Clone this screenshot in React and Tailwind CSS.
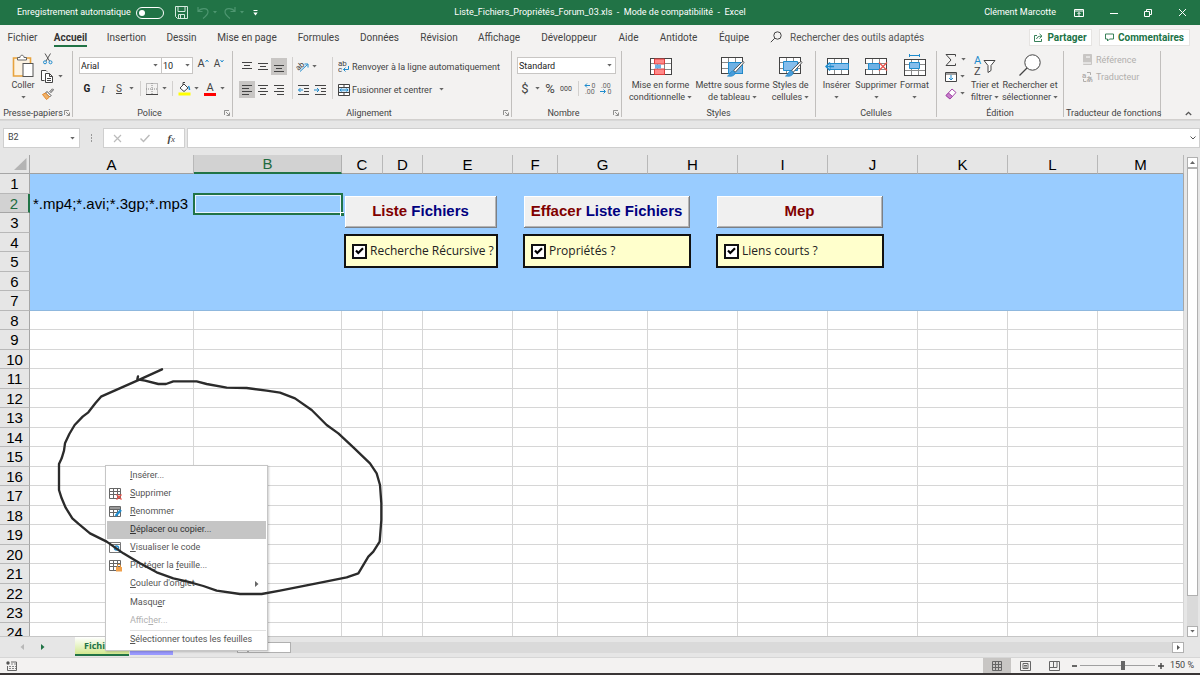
import React from "react";

const INK = "#444444";
const BLUE = "#1e8bcd";

function Icon({ w = 16, h = 16, children, className = "" }) {
  return (
    <svg width={w} height={h} viewBox={`0 0 ${w} ${h}`} fill="none" stroke={INK} strokeWidth="1" className={`shrink-0 ${className}`} aria-hidden="true">
      {children}
    </svg>
  );
}

function Caret({ className = "" }) {
  return (
    <svg width="5" height="3" viewBox="0 0 5 3" className={`shrink-0 ${className}`} aria-hidden="true">
      <path d="M0.3 0h4.4L2.5 2.6z" fill="#666" />
    </svg>
  );
}

function Launcher() {
  return (
    <button aria-label="Plus d'options" className="flex">
      <Icon w={6} h={6}>
        <path d="M0.5 5V0.5H5M2 2l3 3M5.5 2.5v3h-3" stroke="#777" strokeWidth="0.8" />
      </Icon>
    </button>
  );
}

function Group({ label, width, launcher, children }) {
  return (
    <section className={`flex h-[66px] shrink-0 flex-col border-r border-[#c1bfbd] ${width}`}>
      <div className="flex h-[58px] items-start">{children}</div>
      <div className="flex h-[8px] items-center px-[2px]">
        <span className="flex-1 text-center whitespace-nowrap">{label}</span>
        {launcher && <Launcher />}
      </div>
    </section>
  );
}

function Tool({ label, children, className = "" }) {
  return (
    <button aria-label={label} title={label} className={`flex h-4 w-4 shrink-0 items-center justify-center ${className}`}>
      {children}
    </button>
  );
}

function Big({ icon, lines, width, caretBelow }) {
  return (
    <button className={`flex shrink-0 flex-col items-center pt-px ${width}`}>
      <span className="flex h-[27px] items-center">{icon}</span>
      <span className="leading-[12px] whitespace-nowrap">{lines[0]}</span>
      {caretBelow ? (
        <span className="flex h-[12px] items-center"><Caret /></span>
      ) : (
        <span className="flex items-center gap-[2px] leading-[12px] whitespace-nowrap">
          {lines[1]}
          <Caret />
        </span>
      )}
    </button>
  );
}

function Lines({ rows }) {
  return (
    <Icon w={12} h={12}>
      <path d={rows.map(([x1, x2, y]) => `M${x1} ${y}H${x2}`).join("")} />
    </Icon>
  );
}

const TableGrid = () => (
  <>
    <rect x="0.5" y="2.5" width="21" height="16" fill="#fff" />
    <path d="M0 7.5h22M0 13.5h22M7.5 2v17M14.5 2v17" stroke="#8a8a8a" />
    <rect x="0.5" y="2.5" width="21" height="16" />
  </>
);

const Brush = () => (
  <>
    <path d="M23 7.5 14.5 17l-2-1.6L20.5 7.5c1.2-1.2 2.8-.8 2.5 0z" fill="#fff" stroke="#555" />
    <path d="M14 17.3c.6 2.7-2.2 4.5-7.500 3.800 2.500-1 2.300-4.500 5.300-5.200z" fill="#4a9bd8" stroke={BLUE} strokeWidth="0.8" />
  </>
);

const TABS = [
  ["Fichier", "w-[45px]"],
  ["Accueil", "w-[51px]"],
  ["Insertion", "w-[61px]"],
  ["Dessin", "w-[49px]"],
  ["Mise en page", "w-[82px]"],
  ["Formules", "w-[61px]"],
  ["Données", "w-[61px]"],
  ["Révision", "w-[58px]"],
  ["Affichage", "w-[62px]"],
  ["Développeur", "w-[78px]"],
  ["Aide", "w-[41px]"],
  ["Antidote", "w-[59px]"],
  ["Équipe", "w-[52px]"],
];

const COLUMNS = [
  ["A", "w-[164px]"],
  ["B", "w-[148px]"],
  ["C", "w-[41px]"],
  ["D", "w-[40px]"],
  ["E", "w-[90px]"],
  ["F", "w-[45px]"],
  ["G", "w-[90px]"],
  ["H", "w-[90px]"],
  ["I", "w-[90px]"],
  ["J", "w-[90px]"],
  ["K", "w-[90px]"],
  ["L", "w-[90px]"],
  ["M", ""],
];

const ROWS = Array.from({ length: 24 }, (_, i) => i + 1);

function TitleBar() {
  return (
    <header className="grid h-[25px] shrink-0 grid-cols-[1fr_auto_1fr] items-center bg-[#217346] text-[9px] text-white">
      <div className="flex items-center pl-[17px]">
        <label htmlFor="autosave" className="w-[119px] whitespace-nowrap">Enregistrement automatique</label>
        <span className="grid items-center">
          <input id="autosave" type="checkbox" role="switch" className="h-[12px] w-7 appearance-none rounded-full border border-white [grid-area:1/1]" />
          <span className="pointer-events-none ml-[3px] h-[6px] w-[6px] rounded-full bg-white [grid-area:1/1]" />
        </span>
        <button aria-label="Enregistrer" className="ml-[11px]">
          <Icon w={13} h={13}>
            <path d="M0.5 0.500h12v12h-10l-2-2zM3 0.500v5h7v-5M3.500 12.500v-4h6v4M5.500 9v3" stroke="#d5ebdf" />
          </Icon>
        </button>
        <button aria-label="Annuler" className="ml-[9px] flex items-center gap-[4px]">
          <Icon w={12} h={13}>
            <path d="M1 1v4.500h4.500M1 5.500C4 1.500 11 1.500 11 6c0 2.500-2.500 4.500-5 6.500" stroke="#4d9670" strokeWidth="1.200" />
          </Icon>
          <svg width="4" height="3"><path d="M0 0h4L2 2.500z" fill="#4d9670" /></svg>
        </button>
        <button aria-label="Rétablir" className="ml-[7px] flex items-center gap-[4px]">
          <Icon w={12} h={13}>
            <path d="M11 1v4.500H6.500M11 5.500C8 1.500 1 1.500 1 6c0 2.500 2.500 4.500 5 6.500" stroke="#4d9670" strokeWidth="1.200" />
          </Icon>
          <svg width="4" height="3"><path d="M0 0h4L2 2.500z" fill="#4d9670" /></svg>
        </button>
        <button aria-label="Personnaliser la barre d'outils" className="ml-[9px]">
          <Icon w={5} h={6}>
            <path d="M0.500 0.500h4" stroke="#fff" />
            <path d="M0.300 2.500h4.400L2.500 5.500z" fill="#fff" stroke="none" />
          </Icon>
        </button>
      </div>
      <h1 className="whitespace-pre">Liste_Fichiers_Propriétés_Forum_03.xls  -  Mode de compatibilité  -  Excel</h1>
      <div className="flex items-center justify-end pr-[13px]">
        <span className="mr-[18px] whitespace-nowrap">Clément Marcotte</span>
        <button aria-label="Options d'affichage du ruban" className="mr-[26px]">
          <Icon w={10} h={8}><path d="M0.500 0.500h9v7h-9zM1 2h8M5 7V3.500M3.500 5L5 3.500 6.500 5" stroke="#fff" /></Icon>
        </button>
        <button aria-label="Réduire" className="mr-[26px]">
          <Icon w={8} h={8}><path d="M0 4.500h8" stroke="#fff" /></Icon>
        </button>
        <button aria-label="Restaurer" className="mr-[26px]">
          <Icon w={8} h={8}><path d="M0.500 2.500h5v5h-5zM2.500 2.500v-2h5v5h-2" stroke="#fff" /></Icon>
        </button>
        <button aria-label="Fermer">
          <Icon w={9} h={9}><path d="M1 1l7 7M8 1L1 8" stroke="#fff" /></Icon>
        </button>
      </div>
    </header>
  );
}

function TabBar() {
  return (
    <nav className="flex h-[24px] shrink-0 items-center bg-[#f3f2f1] text-[10px] text-[#444]">
      {TABS.map(([name, width]) => (
        <button key={name} className={`flex h-full shrink-0 items-center justify-center whitespace-nowrap ${width}`}>
          <span className={name === "Accueil" ? "border-y-2 border-t-transparent border-b-[#217346] leading-[15px] font-bold text-[#333]" : ""}>{name}</span>
        </button>
      ))}
      <label htmlFor="search" className="ml-[10px]">
        <Icon w={12} h={12}>
          <circle cx="7.500" cy="4.500" r="3.700" />
          <path d="M4.800 7.200L0.800 11.200" />
        </Icon>
      </label>
      <input id="search" placeholder="Rechercher des outils adaptés" className="ml-[8px] w-[180px] bg-transparent outline-none placeholder:text-[#555]" />
      <div className="ml-auto flex gap-[7px] pr-[10px] font-bold text-[#217346]">
        <button className="flex h-[17px] w-[63px] items-center justify-center gap-[4px] border border-[#e6e4e2] bg-white">
          <Icon w={9} h={9}><path d="M3 2.500H0.500v6h7V6M2.500 6c.5-2 2-2.800 5-2.800M5.500 0.800L8 3.200 5.500 5.500" stroke="#217346" strokeWidth="0.900" /></Icon>
          Partager
        </button>
        <button className="flex h-[17px] w-[91px] items-center justify-center gap-[4px] border border-[#e6e4e2] bg-white">
          <Icon w={9} h={9}><path d="M0.500 1h8v5h-4L2.500 8V6h-2z" stroke="#217346" strokeWidth="0.900" /></Icon>
          Commentaires
        </button>
      </div>
    </nav>
  );
}

function Ribbon() {
  return (
    <div className="flex h-[71px] shrink-0 overflow-hidden border-b border-[#d2d0ce] bg-[#f3f2f1] pt-[2px] text-[9px] leading-[12px] text-[#444]">
      <Group label="Presse-papiers" width="w-[73px]" launcher>
        <Big
          width="w-[46px]"
          caretBelow
          lines={["Coller"]}
          icon={
            <Icon w={22} h={24}>
              <path d="M1.500 4h17v18h-17z" stroke="#e8a33d" strokeWidth="1.600" fill="#fdf3e2" />
              <path d="M5.500 6V3.500h2.500c0-3 4-3 4 0H14.500V6z" fill="#fff" stroke="#666" />
              <rect x="11" y="9.500" width="10" height="13" fill="#fff" stroke="#555" />
            </Icon>
          }
        />
        <div className="flex flex-col">
          <Tool label="Couper" className="-ml-[6px]">
            <Icon w={10} h={12}>
              <path d="M2 0.500l4.500 7.500M7.500 0.500L3 8" stroke="#555" />
              <circle cx="2" cy="9.300" r="1.500" stroke={BLUE} /><circle cx="7.500" cy="9.300" r="1.500" stroke={BLUE} />
            </Icon>
          </Tool>
          <button aria-label="Copier" className="-ml-[5px] flex h-[19px] items-center gap-[5px]">
            <Icon w={12} h={13}>
              <path d="M3.500 10.500h-3v-10h4.500l1 1" fill="#fff" />
              <path d="M4.500 3.500h4l3 3v6h-7zM8.500 3.500v3h3M6 8.500h4M6 10.500h4" fill="#fff" />
            </Icon>
            <Caret />
          </button>
          <Tool label="Reproduire la mise en forme" className="-ml-[6px]">
            <Icon w={12} h={12}>
              <path d="M7.500 4L10.500 0.800 11.500 1.800 8.500 5" stroke="#555" />
              <path d="M5 3.500l4 4-1.500 1.500-4-4z" fill="#fff" />
              <path d="M3.500 5L0.500 6.500l4 5L7.500 9z" fill="#f0b26a" stroke="#e58a2c" />
            </Icon>
          </Tool>
        </div>
      </Group>

      <Group label="Police" width="w-[160px]" launcher>
        <div className="flex flex-col gap-[6px] pt-[6px] pl-[6px]">
          <div className="flex h-[17px] items-center">
            <label className="flex h-full w-[83px] items-center border border-[#c8c6c4] bg-white pr-[3px]">
              <select aria-label="Police" className="min-w-0 flex-1 appearance-none bg-transparent pl-[1px] text-[#222] outline-none"><option>Arial</option></select>
              <Caret />
            </label>
            <label className="-ml-px flex h-full w-[32px] items-center border border-[#c8c6c4] bg-white pr-[2px]">
              <select aria-label="Taille de police" className="min-w-0 flex-1 appearance-none bg-transparent pl-[1px] text-[#222] outline-none"><option>10</option></select>
              <Caret />
            </label>
            <Tool label="Agrandir la police" className="ml-[2px] items-start">
              <span className="text-[11px]">A</span><svg width="4" height="5"><path d="M0.500 4L2 2l1.500 2" stroke={BLUE} fill="none" /></svg>
            </Tool>
            <Tool label="Réduire la police" className="items-start">
              <span className="text-[10px]">A</span><svg width="4" height="5"><path d="M0.500 2L2 4l1.500-2" stroke={BLUE} fill="none" /></svg>
            </Tool>
          </div>
          <div className="flex h-[17px] items-center">
            <Tool label="Gras"><b className="text-[10px] text-[#222]">G</b></Tool>
            <Tool label="Italique"><i className="font-['Liberation_Serif',serif] text-[11px]">I</i></Tool>
            <Tool label="Souligné"><span className="text-[10px] underline underline-offset-1">S</span></Tool>
            <Caret className="ml-[2px]" />
            <span className="ml-[6px] h-[15px] w-px bg-[#d2d0ce]" />
            <Tool label="Bordures" className="ml-[3px]">
              <Icon w={12} h={12}><path d="M0.500 0.500h11v11h-11zM6 0v12M0 6h12" stroke="#888" strokeDasharray="1 1" /><path d="M0 11.500h12" /></Icon>
            </Tool>
            <Caret className="ml-[2px]" />
            <span className="ml-[5px] h-[15px] w-px bg-[#d2d0ce]" />
            <Tool label="Couleur de remplissage" className="ml-[3px]">
              <Icon w={13} h={14}>
                <path d="M2 6l4-4 4 4-4 3.500zM5 3V0.500h2" fill="#fff" />
                <path d="M10.500 4c1 2 1 3 1 4" stroke={BLUE} strokeWidth="1.500" />
                <path d="M0.500 12h12" stroke="#ff0" strokeWidth="3" />
              </Icon>
            </Tool>
            <Caret className="ml-[2px]" />
            <Tool label="Couleur de police" className="ml-[3px] flex-col">
              <span className="text-[11px] leading-[11px]">A</span>
              <span className="h-[3px] w-[12px] bg-[#f00]" />
            </Tool>
            <Caret className="ml-[2px]" />
          </div>
        </div>
      </Group>

      <Group label="Alignement" width="w-[279px]" launcher>
        <div className="flex items-center pt-[6px] pl-[6px]">
          <div className="flex flex-col gap-[6px]">
            <div className="flex h-[17px] items-center">
              <Tool label="Aligner en haut" className="h-[17px]"><Lines rows={[[1, 11, 1.5], [3, 9, 4.5], [1, 11, 7.5]]} /></Tool>
              <Tool label="Aligner au centre" className="h-[17px]"><Lines rows={[[1, 11, 2.5], [3, 9, 5.5], [1, 11, 8.5]]} /></Tool>
              <Tool label="Aligner en bas" className="h-[17px] bg-[#c8c6c4]"><Lines rows={[[1, 11, 4.5], [3, 9, 7.5], [1, 11, 10.5]]} /></Tool>
            </div>
            <div className="flex h-[17px] items-center">
              <Tool label="Aligner à gauche" className="h-[17px] bg-[#c8c6c4]"><Lines rows={[[1, 11, 1.5], [1, 8, 4.5], [1, 11, 7.5], [1, 8, 10.5]]} /></Tool>
              <Tool label="Centrer" className="h-[17px]"><Lines rows={[[1, 11, 1.5], [3, 9, 4.5], [1, 11, 7.5], [3, 9, 10.5]]} /></Tool>
              <Tool label="Aligner à droite" className="h-[17px]"><Lines rows={[[1, 11, 1.5], [4, 11, 4.5], [1, 11, 7.5], [4, 11, 10.5]]} /></Tool>
            </div>
          </div>
          <span className="ml-[5px] h-[42px] w-px bg-[#d2d0ce]" />
          <div className="ml-[3px] flex w-[42px] flex-col gap-[6px]">
            <button aria-label="Orientation" className="flex h-[17px] items-center gap-[2px]">
              <Icon w={14} h={13}>
                <text x="0" y="9" transform="rotate(-40 4 7)" fontSize="8" fill={INK} stroke="none">ab</text>
                <path d="M4 11.500L11.500 4.500M8.500 4h3.500v3.500" stroke={BLUE} />
              </Icon>
              <Caret />
            </button>
            <div className="flex h-[17px] items-center">
              <Tool label="Diminuer le retrait">
                <Icon w={12} h={12}><path d="M0 1.500h11M6 4.500h5M6 7.500h5M0 10.500h11" /><path d="M5 6H0.500M2.500 4L0.500 6l2 2" stroke={BLUE} /></Icon>
              </Tool>
              <Tool label="Augmenter le retrait">
                <Icon w={12} h={12}><path d="M1 1.500h11M7 4.500h5M7 7.500h5M1 10.500h11" /><path d="M0 6h5M3 4l2 2-2 2" stroke={BLUE} /></Icon>
              </Tool>
            </div>
          </div>
          <span className="-ml-[6px] h-[42px] w-px bg-[#d2d0ce]" />
          <div className="ml-[5px] flex flex-col gap-[6px]">
            <button className="flex h-[17px] items-center gap-[2px] whitespace-nowrap">
              <Icon w={12} h={13}>
                <text x="0" y="6" fontSize="8" fill={INK} stroke="none">ab</text>
                <text x="0" y="12" fontSize="8" fill={INK} stroke="none">c</text>
                <path d="M10.500 6v3.500H5.500M7.500 7.500l-2 2 2 2" stroke={BLUE} />
              </Icon>
              Renvoyer à la ligne automatiquement
            </button>
            <button className="flex h-[17px] items-center gap-[2px] whitespace-nowrap">
              <Icon w={12} h={12}>
                <path d="M0.500 0.500h11v11h-11zM0 3.500h12M0 8.500h12M6 0v3M6 9v3" fill="#fff" />
                <rect x="1" y="4" width="10" height="4" fill="#cfe6f7" stroke="none" />
                <path d="M2 6h8M3.500 4.500L2 6l1.500 1.500M8.500 4.500L10 6 8.500 7.500" stroke={BLUE} />
              </Icon>
              Fusionner et centrer
              <Caret className="ml-[5px]" />
            </button>
          </div>
        </div>
      </Group>

      <Group label="Nombre" width="w-[110px]" launcher>
        <div className="flex flex-col gap-[6px] pt-[6px] pl-[5px]">
          <label className="flex h-[17px] w-[99px] items-center border border-[#c8c6c4] bg-white pr-[3px]">
            <select aria-label="Format de nombre" className="min-w-0 flex-1 appearance-none bg-transparent pl-[1px] text-[#222] outline-none"><option>Standard</option></select>
            <Caret />
          </label>
          <div className="flex h-[17px] items-center">
            <Tool label="Format comptable"><span className="text-[13px]">$</span></Tool>
            <Caret className="ml-[2px]" />
            <Tool label="Pourcentage" className="ml-[2px]"><span className="text-[13px]">%</span></Tool>
            <Tool label="Milliers"><span className="text-[7px]">000</span></Tool>
            <span className="ml-[4px] h-[15px] w-px bg-[#d2d0ce]" />
            <Tool label="Ajouter une décimale" className="ml-[3px]">
              <Icon w={12} h={13}>
                <text x="7.500" y="6" fontSize="7" fill="#666" stroke="none">0</text>
                <text x="1" y="12" fontSize="7" fill="#666" stroke="none">.00</text>
                <path d="M6 3.500H1M3 1.500L1 3.500l2 2" stroke={BLUE} />
              </Icon>
            </Tool>
            <Tool label="Réduire les décimales">
              <Icon w={12} h={13}>
                <text x="1" y="6" fontSize="7" fill="#666" stroke="none">.00</text>
                <text x="7.500" y="12" fontSize="7" fill="#666" stroke="none">0</text>
                <path d="M0 9.500h5M3.500 7.500l2 2-2 2" stroke={BLUE} />
              </Icon>
            </Tool>
          </div>
        </div>
      </Group>

      <Group label="Styles" width="w-[194px]">
        <Big
          width="w-[77px]"
          lines={["Mise en forme", "conditionnelle"]}
          icon={
            <Icon w={22} h={20}>
              <TableGrid />
              <path d="M4.500 3h10v5h-10zM4.500 13h10v5.500h-10z" fill="#ff8a8a" stroke="#e03c3c" />
              <path d="M5 8.500h6v4H5z" fill="#6fb1e4" stroke="none" />
            </Icon>
          }
        />
        <Big
          width="w-[67px]"
          lines={["Mettre sous forme", "de tableau"]}
          icon={
            <Icon w={24} h={22}>
              <TableGrid />
              <path d="M7.500 7.500h14v11h-14z" fill="#6fb1e4" stroke={BLUE} />
              <Brush />
            </Icon>
          }
        />
        <Big
          width="w-[49px]"
          lines={["Styles de", "cellules"]}
          icon={
            <Icon w={24} h={22}>
              <TableGrid />
              <path d="M4.500 6.500h14v9h-14z" fill="#85bdec" stroke={BLUE} />
              <Brush />
            </Icon>
          }
        />
      </Group>

      <Group label="Cellules" width="w-[121px]">
        <Big
          width="w-[41px]"
          caretBelow
          lines={["Insérer"]}
          icon={
            <Icon w={24} h={20}>
              <g transform="translate(2 0)"><TableGrid /></g>
              <path d="M5 7.500h18.500v6H5z" fill="#85bdec" stroke={BLUE} />
              <path d="M1 10.500h8M5 6.500l-4 4 4 4" stroke={BLUE} strokeWidth="1.500" />
            </Icon>
          }
        />
        <Big
          width="w-[38px]"
          caretBelow
          lines={["Supprimer"]}
          icon={
            <Icon w={23} h={20}>
              <TableGrid />
              <path d="M0 8h4v5H0z" fill="#f3f2f1" stroke="none" />
              <path d="M3.500 7.500h11v6h-11z" fill="#6fb1e4" stroke={BLUE} />
              <path d="M14 6.500l8 8M22 6.500l-8 8" stroke="#e8524a" strokeWidth="1.300" />
            </Icon>
          }
        />
        <Big
          width="w-[39px]"
          caretBelow
          lines={["Format"]}
          icon={
            <Icon w={22} h={24}>
              <g transform="translate(0 3)"><TableGrid /></g>
              <path d="M5.500 8.500h10v6h-10z" fill="#85bdec" stroke={BLUE} />
              <path d="M5 1.500h11M5.500 0v3M15.500 0v3" stroke={BLUE} />
            </Icon>
          }
        />
      </Group>

      <Group label="Édition" width="w-[127px]">
        <div className="flex w-[30px] flex-col pl-[8px]">
          <button aria-label="Somme automatique" className="flex h-[17px] items-center gap-[4px]">
            <Icon w={12} h={12}><path d="M10.500 2.500V0.500H1L6 6l-5 5.500h9.500V9.500" /></Icon><Caret />
          </button>
          <button aria-label="Remplissage" className="flex h-[17px] items-center gap-[3px]">
            <Icon w={12} h={12}><path d="M0.500 1.500h11v9h-11zM0.500 3h11" fill="#fff" /><path d="M6 4v5M4 7l2 2 2-2" stroke={BLUE} /></Icon><Caret />
          </button>
          <button aria-label="Effacer" className="flex h-[17px] items-center gap-[3px]">
            <Icon w={12} h={12}><path d="M7 1l4 3.500-6 6.500-4-3.500z" fill="#fff" stroke="#a346a8" /><path d="M3.500 5L7.500 8.500 5 11 1 7.500z" fill="#c77fcb" stroke="#a346a8" /></Icon><Caret />
          </button>
        </div>
        <Big
          width="w-[36px]"
          lines={["Trier et", "filtrer"]}
          icon={
            <Icon w={22} h={22}>
              <text x="0" y="9" fontSize="11" fill={BLUE} stroke="none">A</text>
              <text x="0" y="20" fontSize="11" fill={INK} stroke="none">Z</text>
              <path d="M10 5.500h11l-4 5v5l-3 2v-7z" fill="#fff" />
            </Icon>
          }
        />
        <Big
          width="w-[54px]"
          lines={["Rechercher et", "sélectionner"]}
          icon={<Icon w={22} h={23}><circle cx="13.500" cy="8.500" r="7.700" fill="#fff" /><path d="M8 14L0.500 21.500" strokeWidth="1.300" /></Icon>}
        />
      </Group>

      <Group label="Traducteur de fonctions" width="w-[97px]">
        <div className="flex flex-col pl-[18px] text-[#b1afad]">
          <button disabled className="flex h-[17px] items-center gap-[3px]">
            <Icon w={11} h={11}><path d="M1.500 0.500h8v10h-8z" fill="#c8c6c4" stroke="#c8c6c4" /><path d="M4 3h4M1 9h8" stroke="#fff" /></Icon>
            Référence
          </button>
          <button disabled className="flex h-[17px] items-center gap-[3px]">
            <Icon w={11} h={11}>
              <text x="0" y="7" fontSize="8" fontWeight="bold" fill="#b1afad" stroke="none">a</text>
              <text x="4" y="11" fontSize="7" fontWeight="bold" fill="#b1afad" stroke="none">あ</text>
              <path d="M5 1.500h3.500v2.500M1.500 8v2.500H4" stroke="#b1afad" />
            </Icon>
            Traducteur
          </button>
        </div>
      </Group>
      <button aria-label="Réduire le ruban" className="mt-auto mr-[8px] mb-[3px] ml-auto">
        <Icon w={7} h={5}><path d="M0.800 4L3.500 1.300 6.200 4" stroke="#555" strokeWidth="1.300" /></Icon>
      </button>
    </div>
  );
}

function FormulaBar() {
  return (
    <div className="flex h-[35px] shrink-0 items-start border-t border-[#d8d8d8] bg-[#e6e6e6] pt-[7px] text-[9px] text-[#444]">
      <label className="ml-[3px] flex h-5 w-[77px] items-center border border-[#cfcfcf] bg-white pr-[4px]">
        <input aria-label="Zone Nom" defaultValue="B2" className="min-w-0 flex-1 bg-transparent pl-[4px] outline-none" />
        <Caret />
      </label>
      <span className="ml-[10px] flex h-5 w-[3px] flex-col items-center justify-center gap-[1px]">
        <i className="h-[2px] w-px bg-[#999]" /><i className="h-[2px] w-px bg-[#999]" /><i className="h-[2px] w-px bg-[#999]" />
      </span>
      <div className="ml-[10px] flex h-5 w-[82px] items-center justify-around border border-[#cfcfcf] bg-white">
        <button aria-label="Annuler la saisie"><Icon w={9} h={9}><path d="M1 1l7 7M8 1L1 8" stroke="#bbb" strokeWidth="1.200" /></Icon></button>
        <button aria-label="Entrer"><Icon w={10} h={9}><path d="M0.500 4.500L3.500 7.500 9.500 1" stroke="#bbb" strokeWidth="1.500" /></Icon></button>
        <button aria-label="Insérer une fonction" className="font-['Liberation_Serif',serif] text-[11px] leading-none italic">
          <b className="font-semibold">f</b><span className="text-[9px]">x</span>
        </button>
      </div>
      <label className="ml-[2px] flex h-5 flex-1 items-center border border-[#cfcfcf] bg-white pr-[3px]">
        <input aria-label="Barre de formule" className="min-w-0 flex-1 bg-transparent outline-none" />
        <Icon w={6} h={4}><path d="M0.500 0.500L3 3l2.500-2.500" stroke="#555" /></Icon>
      </label>
    </div>
  );
}

function CheckPanel({ id, label, width, children }) {
  return (
    <div className={`flex flex-col gap-[6px] ${width}`}>
      <button className="mx-[1px] h-[32px] border-r border-b border-[#7a7f86] bg-[#f0f0f0] text-[15px] font-bold whitespace-nowrap text-[#800000] shadow-[inset_1px_1px_0_#fff,inset_-1px_-1px_0_#b4b4b4]">
        {children}
      </button>
      <div className="flex h-[34px] items-center border-2 border-[#111] bg-[#ffffcc] pl-[6px]">
        <span className="grid place-items-center">
          <input id={id} type="checkbox" defaultChecked className="peer h-[15px] w-[15px] appearance-none border-2 border-[#111] bg-white [grid-area:1/1]" />
          <svg width="9" height="8" viewBox="0 0 9 8" className="pointer-events-none invisible [grid-area:1/1] peer-checked:visible" aria-hidden="true">
            <path d="M1 3.500L3.300 6 8 1.200" stroke="#000" strokeWidth="2.200" fill="none" />
          </svg>
        </span>
        <label htmlFor={id} className="pl-[3px] font-['Open_Sans',sans-serif] text-[12px] whitespace-nowrap text-[#222]">{label}</label>
      </div>
    </div>
  );
}

function Sheet() {
  return (
    <div className="flex min-h-0 flex-1 bg-[#e6e6e6]">
      <div className="relative min-w-0 flex-1 overflow-hidden border-b border-[#c6c6c6] bg-white font-['Liberation_Sans',Arial,sans-serif]">
        <table className="w-full table-fixed border-separate border-spacing-0 text-[15px] leading-[17px] text-black">
          <thead>
            <tr className="h-[19px]">
              <th className="w-[30px] border-r border-b border-[#a6a6a6] bg-[#e6e6e6] p-0">
                <svg width="14" height="14" viewBox="0 0 14 14" className="mr-[2px] ml-auto" aria-label="Tout sélectionner"><path d="M13.500 1v12H1z" fill="#b4b4b4" /></svg>
              </th>
              {COLUMNS.map(([name, width]) => (
                <th key={name} scope="col" className={`border-r p-0 text-center font-normal ${width} ${name === "B" ? "border-b-2 border-r-[#b0b0b0] border-b-[#217346] bg-[#d2d2d2] text-[#1f6b40]" : "border-b border-r-[#b8b8b8] border-b-[#a0a0a0] bg-[#e6e6e6]"}`}>
                  {name}
                </th>
              ))}
            </tr>
          </thead>
          <tbody>
            {ROWS.map((r) => (
              <tr key={r} className={r % 2 ? "h-[20px]" : "h-[19px]"}>
                <th scope="row" className={`border-b p-0 text-center font-normal ${r === 2 ? "border-r-2 border-r-[#217346] border-b-[#a6a6a6] bg-[#d2d2d2] text-[#1f6b40]" : "border-r border-r-[#a6a6a6] border-b-[#b8b8b8] bg-[#e6e6e6]"}`}>
                  {r}
                </th>
                {COLUMNS.map(([c]) => {
                  if (r > 7) return <td key={c} className="border-r border-b border-[#d6d6d6] p-0" />;
                  if (r === 2 && c === "A") return <td key={c} className="bg-[#99ccff] p-0 pl-[3px] whitespace-nowrap">*.mp4;*.avi;*.3gp;*.mp3</td>;
                  if (r === 2 && c === "B")
                    return (
                      <td key={c} className="relative bg-[#99ccff] p-0">
                        <span className="absolute -inset-x-px -top-px -bottom-[2px] border-2 border-[#217346] shadow-[inset_0_0_0_1px_#e8f2ff]" />
                        <span className="absolute -right-[2px] -bottom-[3px] h-[4px] w-[4px] border-t border-l border-white bg-[#217346]" />
                      </td>
                    );
                  return <td key={c} className={`bg-[#99ccff] p-0 ${r === 7 ? "border-b border-[#8fb8de]" : ""} ${c === "M" ? "border-r border-r-[#a6a6a6]" : ""}`} />;
                })}
              </tr>
            ))}
          </tbody>
        </table>
        <div className="absolute top-[41px] left-[344px] flex gap-[25px]">
          <CheckPanel id="recursive" label="Recherche Récursive ?" width="w-[154px]">
            Liste <span className="text-[#000080]">Fichiers</span>
          </CheckPanel>
          <CheckPanel id="properties" label="Propriétés ?" width="w-[168px]">
            Effacer <span className="text-[#000080]">Liste Fichiers</span>
          </CheckPanel>
          <CheckPanel id="links" label="Liens courts ?" width="w-[168px]">Mep</CheckPanel>
        </div>
      </div>
      <div className="flex w-[16px] flex-col items-center pt-[2px]">
        <button aria-label="Défiler vers le haut" className="flex h-[11px] w-[11px] items-center justify-center border border-[#b0b0b0] bg-white">
          <svg width="5" height="3"><path d="M0 3h5L2.500 0z" fill="#666" /></svg>
        </button>
        <div className="w-[11px] grow-[28] border border-[#b0b0b0] bg-white" />
        <div className="w-[11px] grow-[2] bg-[#dadada]" />
        <button aria-label="Défiler vers le bas" className="flex h-[11px] w-[11px] items-center justify-center border border-[#b0b0b0] bg-white"><Caret /></button>
      </div>
    </div>
  );
}

function SheetTabs() {
  return (
    <div className="flex h-[21px] shrink-0 items-start border-b border-[#d6d6d6] bg-[#e6e6e6] text-[9px]">
      <button aria-label="Feuille précédente" className="mt-[7px] ml-[20px]"><svg width="4" height="6"><path d="M4 0v6L0.500 3z" fill="#b8b8b8" /></svg></button>
      <button aria-label="Feuille suivante" className="mt-[7px] ml-[17px]"><svg width="4" height="6"><path d="M0 0v6l3.500-3z" fill="#217346" /></svg></button>
      <button className="ml-[30px] h-[19px] w-[54px] border-b-2 border-[#217346] bg-linear-to-b from-white to-[#d3e88f] pl-[9px] text-left font-['Open_Sans',sans-serif] font-bold text-[#217346]">Fichiers</button>
      <button aria-label="Feuille 2" className="ml-[1px] h-[18px] w-[43px] bg-[#9999ff]" />
      <button aria-label="Nouvelle feuille" className="mt-[2px] ml-[24px]"><Icon w={12} h={12}><circle cx="6" cy="6" r="5.200" stroke="#888" /><path d="M6 3v6M3 6h6" stroke="#888" /></Icon></button>
      <div className="mt-[5px] mr-[16px] ml-[28px] flex h-[11px] flex-1 bg-[#dadada]">
        <button aria-label="Défiler vers la gauche" className="flex w-[11px] items-center justify-center border border-[#b0b0b0] bg-white"><svg width="3" height="5"><path d="M3 0v5L0 2.500z" fill="#666" /></svg></button>
        <div className="w-[43px] border border-[#b0b0b0] bg-white" />
        <button aria-label="Défiler vers la droite" className="ml-auto flex w-[12px] items-center justify-center border border-[#b0b0b0] bg-white"><svg width="3" height="5"><path d="M0 0v5l3-2.500z" fill="#555" /></svg></button>
      </div>
    </div>
  );
}

function StatusBar() {
  return (
    <footer className="flex h-[17px] shrink-0 items-center border-b-2 border-[#3a3636] bg-[#f3f2f1] text-[9px] text-[#444]">
      <button aria-label="Enregistrer une macro" className="ml-[6px]">
        <Icon w={11} h={10}>
          <circle cx="2" cy="2" r="1.700" fill="#555" stroke="none" />
          <path d="M5 1h5.500v8.500h-9V5" stroke="#666" />
          <path d="M5 3h5M3 5.500h7M3 7.500h7" stroke="#888" strokeDasharray="2 1" />
        </Icon>
      </button>
      <button aria-label="Normal" className="ml-auto flex h-full w-[28px] items-center justify-center bg-[#c8c6c4]">
        <Icon w={10} h={10}><path d="M0.500 0.500h9v9h-9zM3.500 0v10M6.500 0v10M0 3.500h10M0 6.500h10" stroke="#666" /></Icon>
      </button>
      <button aria-label="Mise en page" className="flex h-full w-[29px] items-center justify-center">
        <Icon w={11} h={10}><path d="M0.500 0.500h10v9h-10zM3 2.500h5v5H3zM4 4.500h3M4 6h3" stroke="#666" /></Icon>
      </button>
      <button aria-label="Aperçu des sauts de page" className="flex h-full w-[28px] items-center justify-center">
        <Icon w={11} h={10}><path d="M0.500 0.500h10v9h-10zM4.500 0v6M0 6.500h8V0" stroke="#666" /></Icon>
      </button>
      <button aria-label="Zoom arrière" className="ml-[4px]"><Icon w={5} h={6}><path d="M0 3h5" strokeWidth="1.600" /></Icon></button>
      <input
        type="range"
        aria-label="Zoom"
        min="10"
        max="250"
        defaultValue="150"
        className="ml-[3px] h-[10px] w-[75px] appearance-none bg-transparent [&::-webkit-slider-runnable-track]:h-px [&::-webkit-slider-runnable-track]:bg-[#a0a0a0] [&::-webkit-slider-thumb]:-mt-[4px] [&::-webkit-slider-thumb]:h-[9px] [&::-webkit-slider-thumb]:w-[4px] [&::-webkit-slider-thumb]:appearance-none [&::-webkit-slider-thumb]:bg-[#666]"
      />
      <button aria-label="Zoom avant" className="ml-[3px]"><Icon w={6} h={6}><path d="M0 3h6M3 0v6" strokeWidth="1.400" /></Icon></button>
      <span className="w-[36px] pr-[6px] text-right whitespace-nowrap">150 %</span>
    </footer>
  );
}

const MiniTable = ({ children }) => (
  <Icon w={13} h={12}>
    <path d="M0.500 0.500h11v10h-11zM0 3.500h12M0 6.500h12M4.500 1v10M8.500 1v10" stroke="#666" fill="#fff" />
    {children}
  </Icon>
);

function MenuItem({ icon, children, active, disabled, submenu }) {
  return (
    <button
      role="menuitem"
      disabled={disabled}
      className={`flex h-[18px] w-full items-center pr-[7px] text-left whitespace-nowrap ${active ? "bg-[#c5c5c5] text-[#333]" : disabled ? "text-[#b1b1b1]" : "text-[#555]"}`}
    >
      <span className="flex w-[23px] shrink-0 pl-[2px]">{icon}</span>
      <span className="flex-1">{children}</span>
      {submenu && <svg width="4" height="6"><path d="M0 0v6l3.500-3z" fill="#666" /></svg>}
    </button>
  );
}

function SheetMenu() {
  return (
    <div role="menu" className="absolute top-[465px] left-[105px] w-[163px] border border-[#c6c6c6] bg-white px-px pt-px pb-px text-[9px] shadow-[1px_1px_2px_rgba(0,0,0,0.2)]">
      <MenuItem><u>I</u>nsérer...</MenuItem>
      <MenuItem icon={<MiniTable><path d="M7.500 6.500l5 5M12.500 6.500l-5 5" stroke="#e8524a" strokeWidth="1.300" /></MiniTable>}><u>S</u>upprimer</MenuItem>
      <MenuItem icon={<MiniTable><path d="M1 1h10v2H1z" fill="#999" stroke="none" /><path d="M12 4L6.500 10" stroke={BLUE} strokeWidth="2.400" /></MiniTable>}><u>R</u>enommer</MenuItem>
      <MenuItem active><u>D</u>éplacer ou copier...</MenuItem>
      <MenuItem icon={<Icon w={13} h={12}><path d="M0.500 0.500h11v10h-11zM0 2.500h12" stroke="#777" fill="#fff" /><circle cx="7.500" cy="6" r="2" stroke={BLUE} strokeWidth="1.500" /><path d="M9 7.500l3 3" stroke={BLUE} strokeWidth="1.500" /></Icon>}><u>V</u>isualiser le code</MenuItem>
      <MenuItem icon={<MiniTable><path d="M8.500 7V5.500c0-1.500 3-1.500 3 0V7" stroke="#e8963a" /><rect x="7" y="7" width="6" height="4.500" fill="#f0a04b" stroke="none" /></MiniTable>}>Protéger la <u>f</u>euille...</MenuItem>
      <MenuItem submenu><u>C</u>ouleur d'onglet</MenuItem>
      <hr className="ml-[23px] border-[#e1e1e1]" />
      <MenuItem>Masqu<u>e</u>r</MenuItem>
      <MenuItem disabled>Affic<u>h</u>er...</MenuItem>
      <hr className="ml-[23px] border-[#e1e1e1]" />
      <MenuItem><u>S</u>électionner toutes les feuilles</MenuItem>
    </div>
  );
}

function HandDrawnLoop() {
  return (
    <svg width="360" height="250" viewBox="0 0 1080 750" className="pointer-events-none absolute top-[360px] left-[40px]" aria-hidden="true">
      <path
        d="M366 28L300 58 183 110 166 130 145 157 128 170 104 195 88 222 75 250 72 272 65 295 57 312V390L65 415 77 443 97 475 115 491 150 520 200 545 250 580 300 610 350 637 400 655 440 664 490 678 530 692 600 702H665L720 692 830 670 920 652 955 640 985 590 1000 575 1019 545 1024 480V430L1020 375 1010 340 990 310 940 262 895 220 860 195 815 150 765 115 720 98 680 92 620 84 560 83 500 72 470 64H400L378 72H355L315 62 292 58 294 49"
        fill="none"
        stroke="#2b2b2b"
        strokeWidth="7"
        strokeLinejoin="round"
        strokeLinecap="round"
      />
    </svg>
  );
}

export default function App() {
  return (
    <div className="relative flex h-screen flex-col overflow-hidden bg-[#e6e6e6] font-['Roboto','Noto_Sans','Noto_Sans_CJK_JP',sans-serif]">
      <TitleBar />
      <TabBar />
      <Ribbon />
      <FormulaBar />
      <Sheet />
      <SheetTabs />
      <StatusBar />
      <SheetMenu />
      <HandDrawnLoop />
    </div>
  );
}
